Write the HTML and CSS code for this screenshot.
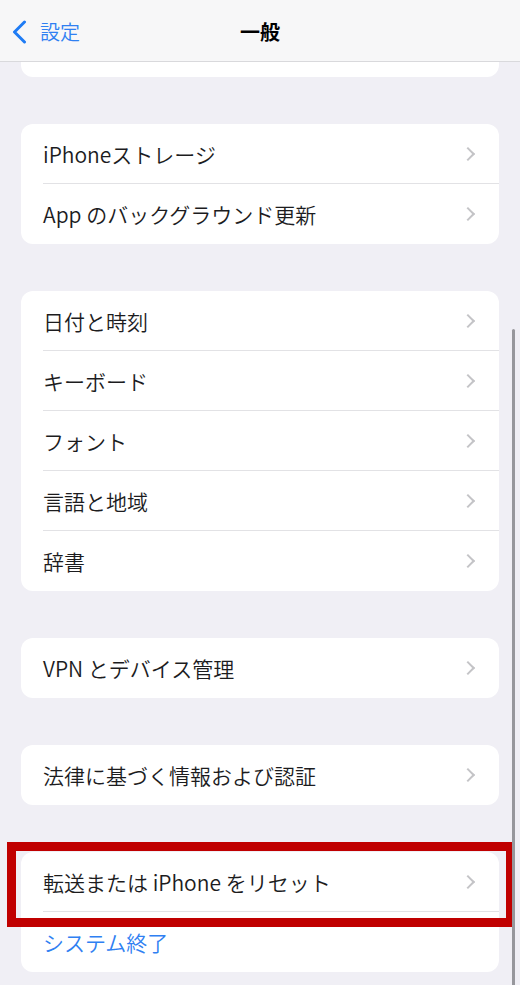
FILE: index.html
```html
<!DOCTYPE html>
<html lang="ja">

<head>
  <meta charset="UTF-8">
  <meta name="viewport" content="width=device-width, initial-scale=1.0">
  <title>一般</title>
  <link rel="stylesheet" href="styles.css">
</head>

<body>
  <div class="navbar">
    <a class="back" href="#">
      <svg class="back-icon" width="15" height="24" viewBox="0 0 15 24">
        <path d="M12.5 2 L2.5 12 L12.5 22" fill="none" stroke="#1f7cf4" stroke-width="3" stroke-linecap="round" stroke-linejoin="round" />
      </svg>
      <span>設定</span>
    </a>
    <div class="title">一般</div>
  </div>

  <div class="list">
    <div class="card card-cut"></div>

    <div class="card">
      <div class="row"><div class="row-inner"><span>iPhoneストレージ</span><i class="chev"></i></div></div>
      <div class="row"><div class="row-inner"><span>App のバックグラウンド更新</span><i class="chev"></i></div></div>
    </div>

    <div class="card">
      <div class="row"><div class="row-inner"><span>日付と時刻</span><i class="chev"></i></div></div>
      <div class="row"><div class="row-inner"><span>キーボード</span><i class="chev"></i></div></div>
      <div class="row"><div class="row-inner"><span>フォント</span><i class="chev"></i></div></div>
      <div class="row"><div class="row-inner"><span>言語と地域</span><i class="chev"></i></div></div>
      <div class="row"><div class="row-inner"><span>辞書</span><i class="chev"></i></div></div>
    </div>

    <div class="card">
      <div class="row"><div class="row-inner"><span>VPN とデバイス管理</span><i class="chev"></i></div></div>
    </div>

    <div class="card">
      <div class="row"><div class="row-inner"><span>法律に基づく情報および認証</span><i class="chev"></i></div></div>
    </div>

    <div class="card-wrap">
      <div class="card">
        <div class="row"><div class="row-inner"><span>転送または iPhone をリセット</span><i class="chev"></i></div></div>
        <div class="row"><div class="row-inner"><span class="link">システム終了</span></div></div>
      </div>
      <div class="highlight"></div>
    </div>
  </div>

  <div class="scrollbar"></div>
</body>

</html>
```

FILE: styles.css
```css
body {
  margin: 0;
  width: 520px;
  height: 985px;
  overflow: hidden;
  position: relative;
  background: #f0eff5;
  font-family: "Noto Sans CJK JP", "Noto Sans", sans-serif;
  color: #1c1c1e;
}

.navbar {
  height: 61px;
  border-bottom: 1px solid #d9d9dc;
  background: #f7f7f8;
  display: flex;
  align-items: center;
  justify-content: center;
  position: relative;
}

.back {
  position: absolute;
  left: 12px;
  top: 20px;
  display: flex;
  align-items: center;
  gap: 13px;
  color: #2f80f2;
  text-decoration: none;
  font-size: 20px;
  font-weight: 350;
  line-height: 24px;
}

.title {
  font-size: 20px;
  font-weight: 700;
  color: #000;
  margin-top: 2px;
}

.list {
  display: flex;
  flex-direction: column;
  gap: 47px;
  padding: 0 21px;
}

.card {
  background: #fff;
  border-radius: 12px;
}

.card-cut {
  height: 15px;
  border-radius: 0 0 12px 12px;
}

.row {
  padding-left: 22px;
}

.row-inner {
  height: 60px;
  box-sizing: border-box;
  display: flex;
  align-items: center;
  justify-content: space-between;
  padding-right: 23px;
  border-bottom: 1px solid #e2e2e5;
  font-size: 21px;
  font-weight: 350;
}

.row:last-child .row-inner {
  border-bottom: none;
}

.chev {
  width: 8px;
  height: 8px;
  border-top: 2.4px solid #c4c4c7;
  border-right: 2.4px solid #c4c4c7;
  transform: rotate(45deg);
  margin-right: 3px;
}

.link {
  color: #2f80f2;
}

.card-wrap {
  position: relative;
}

.highlight {
  position: absolute;
  left: -14px;
  top: -10px;
  width: 508px;
  height: 85px;
  box-sizing: border-box;
  border: 9px solid #c00000;
}

.scrollbar {
  position: absolute;
  left: 512px;
  top: 329px;
  width: 3px;
  height: 680px;
  border-radius: 2px;
  background: #97979c;
}
```
